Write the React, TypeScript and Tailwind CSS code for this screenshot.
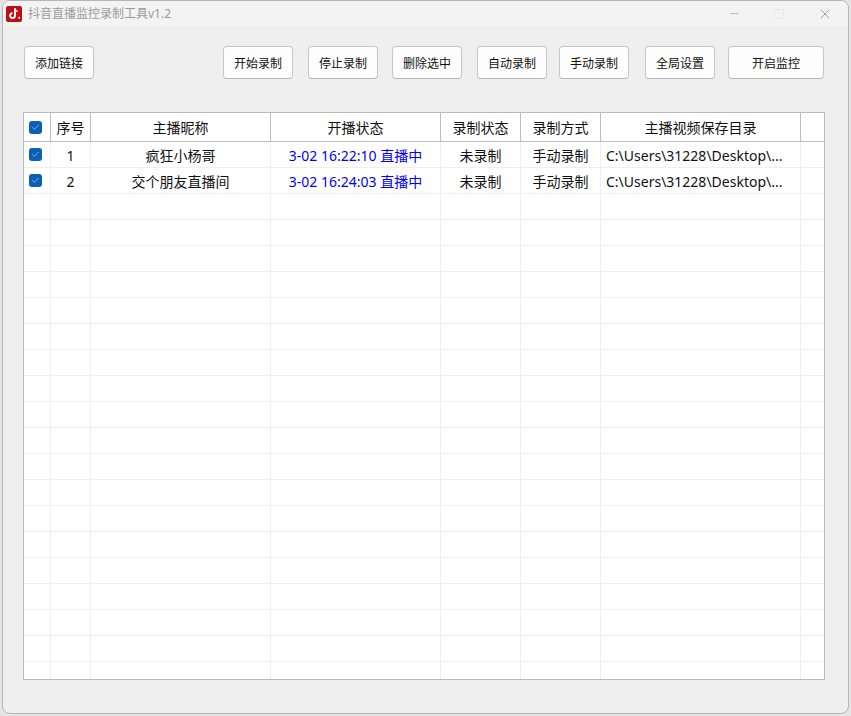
import React from 'react';
import { Check, Minus, Square, X } from 'lucide-react';

const COLUMNS = ['w-[27px]', 'w-[40px]', 'w-[180px]', 'w-[170px]', 'w-[80px]', 'w-[80px]', 'w-[200px]', 'w-[24px]'];
const HEADERS = ['', '序号', '主播昵称', '开播状态', '录制状态', '录制方式', '主播视频保存目录', ''];

const ROWS = [
  { id: 1, name: '疯狂小杨哥', live: '3-02 16:22:10 直播中' },
  { id: 2, name: '交个朋友直播间', live: '3-02 16:24:03 直播中' },
];

const EMPTY_ROWS = Array.from({ length: 19 }, (_, i) => i);

const TableCheck = () => (
  <span className="mr-[3px] flex h-[13px] w-[13px] items-center justify-center rounded-[3px] bg-[#0b5fb8]">
    <Check className="h-[9px] w-[9px] text-[#dbe9f7]" strokeWidth={1.5} />
  </span>
);

const ToolButton = ({ label, className }: { label: string; className: string }) => (
  <button className={`h-[33px] shrink-0 rounded-[4px] border border-[#c6c6c6] border-b-[#b4b4b4] bg-[#fdfdfd] pt-[2px] text-[12px] text-[#111] ${className}`}>
    {label}
  </button>
);

const Cell = ({ index, children, className = '' }: { index: number; children?: React.ReactNode; className?: string }) => (
  <div className={`flex h-full shrink-0 items-center justify-center border-r border-[#efefef] last:border-r-0 ${COLUMNS[index]} ${className}`}>
    {children}
  </div>
);

export default function App() {
  return (
    <div className="h-[716px] w-[851px] bg-[#e4e4e4] pb-[2px] pl-[2px] pr-[2px] font-['Noto_Sans','Noto_Sans_CJK_SC',sans-serif]">
      <div className="flex h-[714px] flex-col overflow-hidden rounded-[8px] border border-[#b5b5b5] bg-[#efefef]">
        {/* Title bar */}
        <div className="flex h-[25px] shrink-0 items-center bg-[#f3f3f3]">
          <div className="ml-[3px] flex h-[16px] w-[16px] items-center justify-center rounded-[2px] bg-[#c00d12]">
            <svg viewBox="0 0 16 16" className="h-[15px] w-[15px]" fill="none" stroke="#fff">
              <path d="M8.5 2.5v7.7a2.6 2.6 0 1 1-2.6-2.6" strokeWidth="2" />
              <path d="M8.5 3c.4 1.6 1.5 2.6 3 2.8" strokeWidth="1.6" />
              <circle cx="13" cy="12.5" r="1.1" fill="#fff" stroke="none" />
            </svg>
          </div>
          <span className="ml-[6px] text-[12px] text-[#9b9b9b]">抖音直播监控录制工具v1.2</span>
          <div className="ml-auto flex items-center">
            <Minus className="h-[13px] w-[13px] text-[#8a8a8a]" strokeWidth={1} />
            <Square className="ml-[32px] h-[12px] w-[12px] text-[#dcdcdc]" strokeWidth={1} />
            <X className="ml-[32px] mr-[15px] h-[16px] w-[16px] text-[#777]" strokeWidth={1} />
          </div>
        </div>

        {/* Toolbar */}
        <div className="mt-[20px] flex pl-[21px]">
          <ToolButton label="添加链接" className="w-[70px]" />
          <ToolButton label="开始录制" className="ml-[129px] w-[70px]" />
          <ToolButton label="停止录制" className="ml-[15px] w-[70px]" />
          <ToolButton label="删除选中" className="ml-[14px] w-[70px]" />
          <ToolButton label="自动录制" className="ml-[15px] w-[70px]" />
          <ToolButton label="手动录制" className="ml-[12px] w-[70px]" />
          <ToolButton label="全局设置" className="ml-[16px] w-[70px]" />
          <ToolButton label="开启监控" className="ml-[13px] w-[96px]" />
        </div>

        {/* Table */}
        <div className="ml-[20px] mt-[33px] h-[568px] w-[802px] overflow-hidden border border-[#b9b9b9] bg-white text-[14px] text-[#111]">
          <div className="flex h-[29px] border-b border-[#bdbdbd]">
            {HEADERS.map((header, i) => (
              <div
                key={i}
                className={`flex h-full shrink-0 items-center justify-center border-r border-[#bdbdbd] last:border-r-0 ${COLUMNS[i]}`}
              >
                {i === 0 ? <TableCheck /> : header}
              </div>
            ))}
          </div>

          {ROWS.map((row) => (
            <div key={row.id} className="flex h-[26px] border-b border-[#efefef]">
              <Cell index={0}><TableCheck /></Cell>
              <Cell index={1} className="pt-[2px]">{row.id}</Cell>
              <Cell index={2} className="pt-[2px]">{row.name}</Cell>
              <Cell index={3} className="pt-[2px] text-[#0000ff]">{row.live}</Cell>
              <Cell index={4} className="pt-[2px]">未录制</Cell>
              <Cell index={5} className="pt-[2px]">手动录制</Cell>
              <Cell index={6} className="!justify-start pl-[5px] pt-[2px]">C:\Users\31228\Desktop\...</Cell>
              <Cell index={7} />
            </div>
          ))}

          {EMPTY_ROWS.map((i) => (
            <div key={i} className="flex h-[26px] border-b border-[#efefef]">
              {COLUMNS.map((_, c) => <Cell key={c} index={c} />)}
            </div>
          ))}
        </div>
      </div>
    </div>
  );
}
